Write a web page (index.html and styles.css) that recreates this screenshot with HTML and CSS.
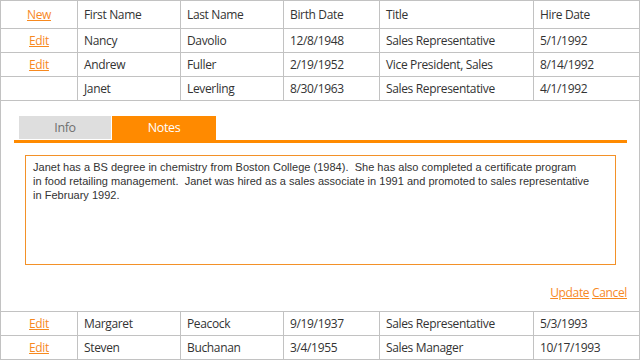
FILE: index.html
```html
<!DOCTYPE html>
<html lang="en">
<head>
  <meta charset="UTF-8">
  <meta name="viewport" content="width=device-width, initial-scale=1">
  <title>Employees</title>
  <link rel="stylesheet" href="styles.css">
</head>
<body>

  <table class="grid">
    <colgroup>
      <col class="c-cmd">
      <col class="c-first">
      <col class="c-last">
      <col class="c-birth">
      <col class="c-title">
      <col class="c-hire">
    </colgroup>
    <thead>
      <tr>
        <th class="cmd"><a href="#">New</a></th>
        <th>First Name</th>
        <th>Last Name</th>
        <th>Birth Date</th>
        <th>Title</th>
        <th>Hire Date</th>
      </tr>
    </thead>
    <tbody>
      <tr>
        <td class="cmd"><a href="#">Edit</a></td>
        <td>Nancy</td>
        <td>Davolio</td>
        <td>12/8/1948</td>
        <td>Sales Representative</td>
        <td>5/1/1992</td>
      </tr>
      <tr>
        <td class="cmd"><a href="#">Edit</a></td>
        <td>Andrew</td>
        <td>Fuller</td>
        <td>2/19/1952</td>
        <td>Vice President, Sales</td>
        <td>8/14/1992</td>
      </tr>
      <tr>
        <td class="cmd"></td>
        <td>Janet</td>
        <td>Leverling</td>
        <td>8/30/1963</td>
        <td>Sales Representative</td>
        <td>4/1/1992</td>
      </tr>
      <tr class="edit-row">
        <td colspan="6">
          <div class="edit-form">
            <div class="tabs">
              <span class="tab">Info</span>
              <span class="tab active">Notes</span>
            </div>
            <div class="tab-page">
              <div class="notes">Janet has a BS degree in chemistry from Boston College (1984).&nbsp; She has also completed a certificate program<br>in food retailing management.&nbsp; Janet was hired as a sales associate in 1991 and promoted to sales representative<br>in February 1992.</div>
            </div>
            <div class="form-links">
              <a href="#">Update</a> <a href="#">Cancel</a>
            </div>
          </div>
        </td>
      </tr>
      <tr>
        <td class="cmd"><a href="#">Edit</a></td>
        <td>Margaret</td>
        <td>Peacock</td>
        <td>9/19/1937</td>
        <td>Sales Representative</td>
        <td>5/3/1993</td>
      </tr>
      <tr>
        <td class="cmd"><a href="#">Edit</a></td>
        <td>Steven</td>
        <td>Buchanan</td>
        <td>3/4/1955</td>
        <td>Sales Manager</td>
        <td>10/17/1993</td>
      </tr>
    </tbody>
  </table>

</body>
</html>
```

FILE: styles.css
```css
body {
  margin: 0;
  background: #fff;
  font-family: "Open Sans", "Noto Sans", sans-serif;
  font-size: 12px;
  letter-spacing: -0.35px;
  color: #333;
}

a {
  color: #f7891f;
}

.grid {
  width: 640px;
  table-layout: fixed;
  border-collapse: separate;
  border-spacing: 0;
  border-top: 1px solid #c2c2c2;
  border-left: 1px solid #c2c2c2;
}

.c-cmd { width: 77px; }
.c-first { width: 103px; }
.c-last { width: 103px; }
.c-birth { width: 96px; }
.c-title { width: 154px; }
.c-hire { width: 106px; }

.grid th,
.grid td {
  box-sizing: border-box;
  border-right: 1px solid #c2c2c2;
  border-bottom: 1px solid #c2c2c2;
  padding: 0 6px;
  text-align: left;
  font-weight: normal;
  white-space: nowrap;
  height: 24px;
}

.grid th {
  height: 28px;
}

.grid .cmd {
  text-align: center;
}

.edit-row td {
  padding: 0;
  height: 211px;
  vertical-align: top;
  white-space: normal;
}

.edit-form {
  padding: 15px 12px 0 13px;
}

.tabs {
  display: flex;
  gap: 1px;
  padding-left: 5px;
}

.tab {
  width: 92px;
  height: 23px;
  line-height: 23px;
  text-align: center;
  background: #dedede;
  color: #6f6f6f;
  font-size: 12.5px;
}

.tab.active {
  width: 104px;
  height: 24px;
  background: #ff8a00;
  color: #fff;
}

.tab-page {
  border-top: 3px solid #ff8a00;
  padding: 12px 11px 0 11px;
}

.notes {
  height: 110px;
  box-sizing: border-box;
  border: 1px solid #f39128;
  padding: 4px 7px 3px;
  font-family: "Liberation Sans", Arial, sans-serif;
  font-size: 11px;
  letter-spacing: 0.02px;
  line-height: 14px;
  color: #333;
  white-space: nowrap;
}

.form-links {
  text-align: right;
  margin-top: 19px;
}
```
